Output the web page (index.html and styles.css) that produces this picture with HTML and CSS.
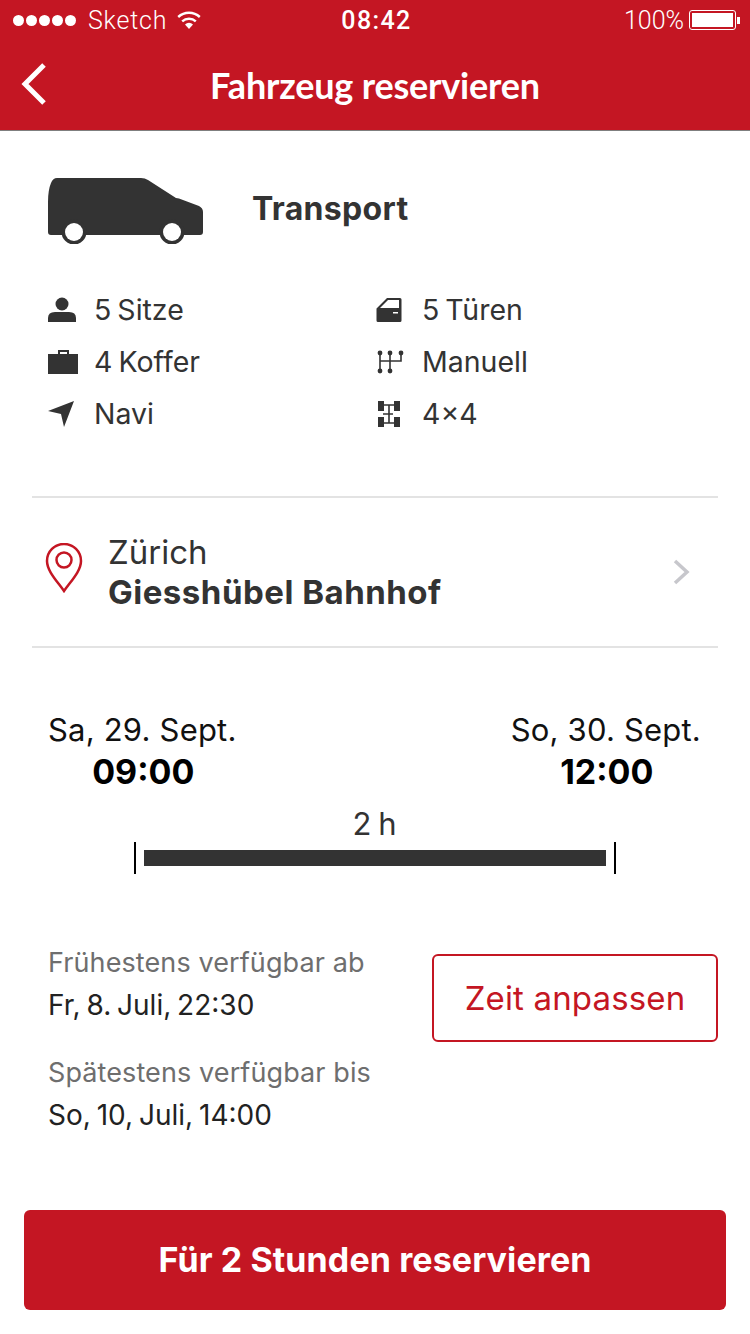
FILE: index.html
```html
<!DOCTYPE html>
<html lang="de">
<head>
    <meta charset="UTF-8">
    <title>Fahrzeug reservieren</title>
    <link rel="stylesheet" href="styles.css">
</head>
<body>
    <header class="kopf">
        <div class="status">
            <div class="status-links">
                <span class="dots"><i></i><i></i><i></i><i></i><i></i></span>
                <span class="carrier">Sketch</span>
                <svg class="wifi" width="26" height="20" viewBox="0 0 26 20">
                    <path d="M13 19l-4-4.600a6 6 0 0 1 8 0z" fill="#fff"/>
                    <path d="M6.200 11.400a10 10 0 0 1 13.600 0" fill="none" stroke="#fff" stroke-width="2.400"/>
                    <path d="M2.200 7a15.800 15.800 0 0 1 21.600 0" fill="none" stroke="#fff" stroke-width="2.400"/>
                </svg>
            </div>
            <div class="uhr">08:42</div>
            <div class="status-rechts">
                <span>100%</span>
                <span class="akku"><b></b></span>
                <span class="akku-pol"></span>
            </div>
        </div>
        <div class="nav">
            <svg class="zurueck" width="30" height="44" viewBox="0 0 30 44">
                <path d="M26 3L7 22l19 19" fill="none" stroke="#fff" stroke-width="5"/>
            </svg>
            <h1>Fahrzeug reservieren</h1>
        </div>
    </header>

    <section class="fahrzeug">
        <div class="typ">
            <svg class="van" width="156" height="66" viewBox="0 0 156 66">
                <path d="M9 0h84q4 0 7 2l28 18 3 .5 20 7.500q4 2 4 6V54q0 3-3 3H3q-3 0-3-3V24Q0 12 3 5 5 0 9 0z" fill="#333"/>
                <circle cx="26" cy="54" r="12.500" fill="#333"/>
                <circle cx="124" cy="54" r="12.500" fill="#333"/>
                <circle cx="26" cy="54" r="9" fill="#fff"/>
                <circle cx="124" cy="54" r="9" fill="#fff"/>
            </svg>
            <h2>Transport</h2>
        </div>
        <div class="merkmale">
            <div class="merkmal">
                <svg width="30" height="26" viewBox="0 0 30 26"><circle cx="14" cy="7" r="6.500" fill="#333"/><path d="M0 25v-4q0-6 7-6h14q7 0 7 6v4z" fill="#333"/></svg>
                <span>5 Sitze</span>
            </div>
            <div class="merkmal rechts">
                <svg width="30" height="26" viewBox="0 0 30 26"><path fill-rule="evenodd" d="M11 1h13a1.500 1.500 0 0 1 1.500 1.500v21a1.500 1.500 0 0 1-1.500 1.500H2a1.500 1.500 0 0 1-1.500-1.500V11.500zM12 3L4 11h19V3zM17 15v1.500h5V15z" fill="#333"/></svg>
                <span>5 Türen</span>
            </div>
            <div class="merkmal">
                <svg width="30" height="26" viewBox="0 0 30 26"><path fill-rule="evenodd" d="M10 1h11v4h9v20H0V5h10zM12 3v2h7V3z" fill="#333"/></svg>
                <span>4 Koffer</span>
            </div>
            <div class="merkmal rechts">
                <svg width="30" height="26" viewBox="0 0 30 26">
                    <path d="M4 5v18M14 5v18M25 5v7H4" fill="none" stroke="#333" stroke-width="1.600"/>
                    <g fill="#333"><circle cx="4" cy="4" r="2.400"/><circle cx="14" cy="4" r="2.400"/><circle cx="25" cy="4" r="2.400"/><circle cx="4" cy="22" r="2.400"/><circle cx="14" cy="22" r="2.400"/></g>
                </svg>
                <span>Manuell</span>
            </div>
            <div class="merkmal">
                <svg width="30" height="26" viewBox="0 0 30 26"><path d="M26 0L16 26l-3-13L0 10z" fill="#333"/></svg>
                <span>Navi</span>
            </div>
            <div class="merkmal rechts">
                <svg width="30" height="28" viewBox="0 0 30 28">
                    <path d="M13 5v18M7 5h13M7 14h10M7 23h13" fill="none" stroke="#333" stroke-width="1.600"/>
                    <g fill="#333"><rect x="2" y="1" width="6" height="10"/><rect x="18" y="1" width="6" height="10"/><rect x="2" y="17" width="6" height="10"/><rect x="18" y="17" width="6" height="10"/></g>
                </svg>
                <span>4×4</span>
            </div>
        </div>
    </section>

    <section class="standort">
        <svg class="pin" width="38" height="52" viewBox="0 0 38 52">
            <path d="M19 48C12 38 2 28 2 18a17 17 0 0 1 34 0c0 10-10 20-17 30z" fill="none" stroke="#c41623" stroke-width="2.500"/>
            <circle cx="19" cy="17" r="7.500" fill="none" stroke="#c41623" stroke-width="2.500"/>
        </svg>
        <div class="adresse">
            <div class="stadt">Zürich</div>
            <div class="strasse">Giesshübel Bahnhof</div>
        </div>
        <svg class="pfeil" width="20" height="26" viewBox="0 0 20 26">
            <path d="M3 2l12 11L3 24" fill="none" stroke="#c7c7cc" stroke-width="3.500"/>
        </svg>
    </section>

    <section class="zeitraum">
        <div class="daten">
            <div class="termin">
                <div class="tag">Sa, 29. Sept.</div>
                <div class="zeit">09:00</div>
            </div>
            <div class="termin">
                <div class="tag">So, 30. Sept.</div>
                <div class="zeit">12:00</div>
            </div>
        </div>
        <div class="dauer">2 h</div>
        <div class="balken"><div class="balken-fill"></div></div>
    </section>

    <section class="verfuegbar">
        <div class="verfuegbar-text">
            <div class="label">Frühestens verfügbar ab</div>
            <div class="wert">Fr, 8. Juli, 22:30</div>
            <div class="label zweite">Spätestens verfügbar bis</div>
            <div class="wert">So, 10, Juli, 14:00</div>
        </div>
        <button class="anpassen">Zeit anpassen</button>
    </section>

    <div class="aktion">
        <button class="reservieren">Für 2 Stunden reservieren</button>
    </div>
</body>
</html>
```

FILE: styles.css
```css
* {
    box-sizing: border-box;
}
body {
    margin: 0;
    width: 750px;
    height: 1334px;
    overflow: hidden;
    background-color: #fff;
    font-family: "Inter", "Liberation Sans", sans-serif;
    color: #333;
}
h1, h2 {
    margin: 0;
}

/* kopf */
.kopf {
    height: 131px;
    background-color: #c41623;
    border-bottom: 1px solid #7f7f7f;
    color: #fff;
}
.status {
    height: 40px;
    padding: 0 10px 0 13px;
    display: flex;
    align-items: center;
    justify-content: space-between;
    font-family: "Roboto", sans-serif;
    font-weight: 300;
    font-size: 25px;
}
.status-links, .status-rechts {
    width: 230px;
    display: flex;
    align-items: center;
}
.status-rechts {
    justify-content: flex-end;
}
.dots {
    display: flex;
    gap: 2px;
}
.dots i {
    width: 11px;
    height: 11px;
    border-radius: 50%;
    background-color: #fff;
}
.carrier {
    margin-left: 12px;
    letter-spacing: 0.8px;
}
.wifi {
    margin-left: 9px;
}
.uhr {
    font-weight: 500;
    letter-spacing: 1.4px;
}
.akku {
    width: 47px;
    height: 20px;
    margin-left: 5px;
    padding: 2px;
    border: 1px solid #fff;
    border-radius: 3px;
}
.akku b {
    display: block;
    height: 100%;
    background-color: #fff;
}
.akku-pol {
    width: 3px;
    height: 7px;
    margin-left: 1px;
    background-color: #fff;
}
.nav {
    height: 90px;
    padding-left: 18px;
    padding-bottom: 2px;
    display: flex;
    align-items: center;
    position: relative;
}
.nav h1 {
    position: absolute;
    left: 0;
    right: 0;
    margin-top: 2px;
    text-align: center;
    font-family: "Lato", sans-serif;
    font-size: 36px;
    font-weight: 700;
    letter-spacing: -0.2px;
}

/* fahrzeug */
.fahrzeug {
    margin: 0 32px;
    padding: 47px 0 0 16px;
    height: 367px;
    border-bottom: 2px solid #e3e3e3;
}
.typ {
    display: flex;
    align-items: flex-start;
}
.typ h2 {
    margin-left: 48px;
    margin-top: 11px;
    font-size: 32px;
    line-height: 40px;
    font-weight: 700;
    letter-spacing: 0.3px;
}
.merkmale {
    margin-top: 46px;
    display: grid;
    grid-template-columns: 328px 1fr;
    row-gap: 12px;
}
.merkmal {
    height: 40px;
    display: flex;
    align-items: center;
    gap: 16px;
    font-size: 28.5px;
    word-spacing: -2px;
}
.merkmal span {
    margin-top: -2px;
}

/* standort */
.standort {
    margin: 0 32px;
    height: 150px;
    padding: 0 26px 0 13px;
    display: flex;
    align-items: center;
    border-bottom: 2px solid #e3e3e3;
}
.pin {
    margin-bottom: 6px;
}
.adresse {
    margin-left: 25px;
    flex: 1;
}
.stadt {
    font-size: 33px;
    line-height: 40px;
}
.strasse {
    font-size: 33px;
    line-height: 40px;
    font-weight: 700;
    letter-spacing: 0.5px;
}

/* zeitraum */
.zeitraum {
    padding: 62px 49px 0 48px;
}
.daten {
    display: flex;
    justify-content: space-between;
    text-align: center;
}
.tag {
    font-size: 31px;
    line-height: 40px;
    color: #111;
    letter-spacing: 0.2px;
}
.zeit {
    margin-top: 2px;
    padding-left: 2px;
    font-size: 34px;
    line-height: 40px;
    font-weight: 700;
    color: #000;
}
.dauer {
    margin-top: 12px;
    text-align: center;
    font-size: 31px;
    line-height: 40px;
    word-spacing: -2px;
}
.balken {
    margin: -2px 85px 0 86px;
    height: 32px;
    padding: 8px;
    border-left: 2px solid #000;
    border-right: 2px solid #000;
}
.balken-fill {
    height: 16px;
    background-color: #333;
}

/* verfuegbar */
.verfuegbar {
    margin-top: 70px;
    padding: 0 32px 0 48px;
    display: flex;
    justify-content: space-between;
    align-items: flex-start;
}
.label {
    font-size: 27px;
    line-height: 38px;
    color: #6e6e6e;
    letter-spacing: 0.1px;
}
.label.zweite {
    margin-top: 29px;
}
.wert {
    margin-top: 3px;
    font-size: 28px;
    line-height: 40px;
    color: #222;
    word-spacing: -2px;
}
.anpassen {
    width: 286px;
    height: 88px;
    margin-top: 10px;
    border: 2px solid #c41623;
    border-radius: 6px;
    background-color: #fff;
    color: #c41623;
    font-family: inherit;
    font-size: 33px;
    letter-spacing: 0.15px;
}

/* aktion */
.aktion {
    padding: 0 24px;
    margin-top: 75px;
}
.reservieren {
    width: 100%;
    height: 100px;
    padding-bottom: 3px;
    border: 0;
    border-radius: 6px;
    background-color: #c41623;
    color: #fff;
    font-family: inherit;
    font-size: 34px;
    font-weight: 700;
    letter-spacing: 0.1px;
}
```
